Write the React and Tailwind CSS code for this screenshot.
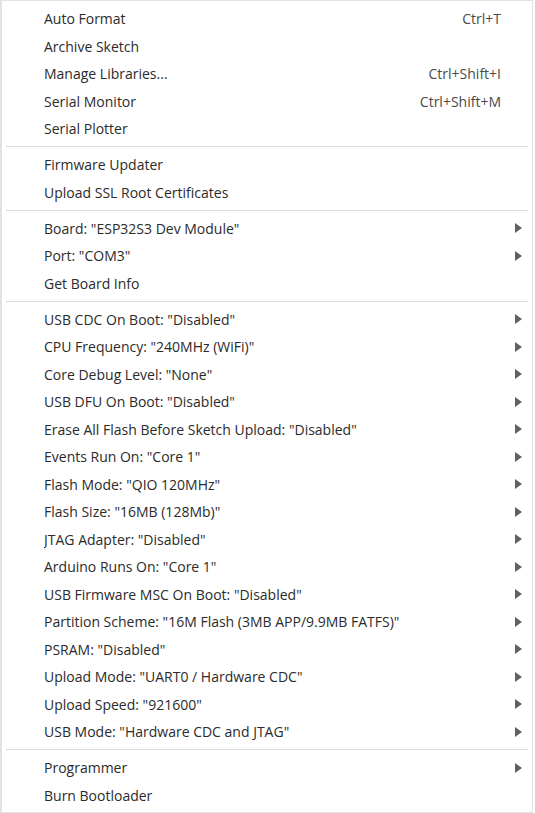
import React from 'react';

const groups = [
  [
    { label: 'Auto Format', shortcut: 'Ctrl+T' },
    { label: 'Archive Sketch' },
    { label: 'Manage Libraries...', shortcut: 'Ctrl+Shift+I' },
    { label: 'Serial Monitor', shortcut: 'Ctrl+Shift+M' },
    { label: 'Serial Plotter' },
  ],
  [
    { label: 'Firmware Updater' },
    { label: 'Upload SSL Root Certificates' },
  ],
  [
    { label: 'Board: "ESP32S3 Dev Module"', sub: true },
    { label: 'Port: "COM3"', sub: true },
    { label: 'Get Board Info' },
  ],
  [
    { label: 'USB CDC On Boot: "Disabled"', sub: true },
    { label: 'CPU Frequency: "240MHz (WiFi)"', sub: true },
    { label: 'Core Debug Level: "None"', sub: true },
    { label: 'USB DFU On Boot: "Disabled"', sub: true },
    { label: 'Erase All Flash Before Sketch Upload: "Disabled"', sub: true },
    { label: 'Events Run On: "Core 1"', sub: true },
    { label: 'Flash Mode: "QIO 120MHz"', sub: true },
    { label: 'Flash Size: "16MB (128Mb)"', sub: true },
    { label: 'JTAG Adapter: "Disabled"', sub: true },
    { label: 'Arduino Runs On: "Core 1"', sub: true },
    { label: 'USB Firmware MSC On Boot: "Disabled"', sub: true },
    { label: 'Partition Scheme: "16M Flash (3MB APP/9.9MB FATFS)"', sub: true },
    { label: 'PSRAM: "Disabled"', sub: true },
    { label: 'Upload Mode: "UART0 / Hardware CDC"', sub: true },
    { label: 'Upload Speed: "921600"', sub: true },
    { label: 'USB Mode: "Hardware CDC and JTAG"', sub: true },
  ],
  [
    { label: 'Programmer', sub: true },
    { label: 'Burn Bootloader' },
  ],
];

function MenuItem({ item }) {
  return (
    <div className="flex items-center h-[27.5px] pl-[42px] text-[14px] text-[#2b2b2b]">
      <span className="flex-1 truncate">{item.label}</span>
      {item.shortcut && <span className="text-[#4a4a4a]">{item.shortcut}</span>}
      <span className="w-[31px] flex justify-end pr-[10px]">
        {item.sub && (
          <svg width="7" height="10" viewBox="0 0 7 10">
            <path d="M0 0 L7 5 L0 10 Z" fill="#616161" />
          </svg>
        )}
      </span>
    </div>
  );
}

export default function App() {
  return (
    <div className="w-[533px] h-[813px] bg-white border border-[#e2e2e2] border-l-2 pt-[4px] pb-[2px]" style={{ fontFamily: '"Open Sans", sans-serif' }}>
      {groups.map((group, gi) => (
        <div key={gi}>
          {gi > 0 && (
            <div className="h-[8.5px] flex items-center px-[4px]">
              <div className="h-px w-full bg-[#dadada]"></div>
            </div>
          )}
          {group.map((item) => (
            <MenuItem key={item.label} item={item} />
          ))}
        </div>
      ))}
    </div>
  );
}
